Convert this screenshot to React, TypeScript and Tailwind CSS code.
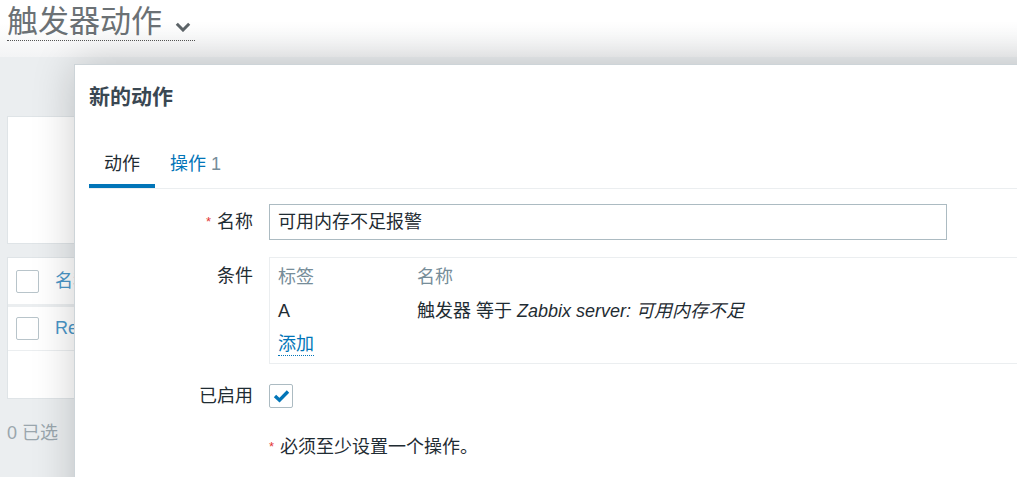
import React from "react";

const FONT = "font-['Liberation_Sans','Noto_Sans_CJK_SC',sans-serif]";

export default function App() {
  return (
    <div className={`relative w-[1017px] h-[477px] overflow-hidden bg-[#ebeef0] ${FONT} text-[18px] text-[#1f2c33]`}>
      {/* Page header */}
      <header className="h-[57px] bg-gradient-to-b from-white from-40% to-[#f3f4f5] px-[7px]">
        <div className="inline-flex items-center gap-[13px] pt-[4px] border-b border-dotted border-[#555]">
          <span className="text-[31px] leading-[36px] text-[#6b7175]">触发器动作</span>
          <svg width="16" height="10" viewBox="0 0 16 10" className="mt-[9px] mr-[4px]">
            <path d="M1.8 1.8 L8 8 L14.2 1.8" fill="none" stroke="#5d6468" strokeWidth="3" />
          </svg>
        </div>
      </header>

      {/* Background page content */}
      <main className="px-[7px] pt-[59px]">
        <div className="h-[128px] bg-white border border-[#dfe4e7]" />
        <div className="mt-[13px] bg-white border border-[#dfe4e7]">
          <div className="h-[46px] flex items-center gap-[16px] pl-[8px]">
            <div className="w-[23px] h-[23px] rounded-[2px] border border-[#b8c4ca] bg-white" />
            <span className="text-[#4a96c8]">名称</span>
          </div>
          <div className="h-[3px] bg-[#ebeef0]" />
          <div className="h-[44px] flex items-center gap-[16px] pl-[8px] border-b border-[#ebeef0]">
            <div className="w-[23px] h-[23px] rounded-[2px] border border-[#b8c4ca] bg-white" />
            <span className="text-[#4a96c8]">Report</span>
          </div>
          <div className="h-[47px]" />
        </div>
        <div className="mt-[22px] text-[#9aa6ad] leading-[24px]">0 已选</div>
      </main>

      {/* Dialog overlay */}
      <div className="absolute left-[74px] top-[64px] w-[1000px] h-[480px] bg-white border border-[#cdd4d8] shadow-[0_0_40px_rgba(0,0,0,0.2)] pl-[14px] pr-[15px]">
        <h2 className="pt-[20px] pb-[31px] text-[21px] leading-[24px] font-bold text-[#3a4752]">新的动作</h2>

        {/* Tabs */}
        <div className="flex border-b border-[#ebeef0]">
          <div className="px-[15px] pt-[12px] pb-[8px] border-b-4 border-[#0275b8] leading-[24px]">动作</div>
          <div className="px-[15px] pt-[12px] pb-[8px] border-b-4 border-transparent leading-[24px] text-[#0275b8]">
            操作 <span className="text-[#768d99]">1</span>
          </div>
        </div>

        {/* Form */}
        <div className="mt-[15px] flex items-center">
          <div className="w-[164px] text-right leading-[24px]">
            <span className="text-[#e33734] text-[13px] align-top mr-[6px]">*</span>名称
          </div>
          <div className="ml-[16px] w-[678px] h-[36px] border border-[#acbbc2] px-[8px] flex items-center leading-[24px]">
            可用内存不足报警
          </div>
        </div>

        <div className="mt-[17px] flex items-start">
          <div className="w-[164px] text-right leading-[24px] pt-[7px]">条件</div>
          <div className="ml-[16px] flex-1 h-[107px] border border-[#ebeef0] px-[8px] pt-[7px] leading-[24px]">
            <div className="flex text-[#768d99]">
              <div className="w-[139px]">标签</div>
              <div>名称</div>
            </div>
            <div className="flex mt-[10px]">
              <div className="w-[139px]">A</div>
              <div>
                触发器 等于 <span className="italic">Zabbix server: 可用内存不足</span>
              </div>
            </div>
            <div className="mt-[9px]">
              <span className="text-[#0275b8] border-b border-dotted border-[#0275b8] pb-[1px]">添加</span>
            </div>
          </div>
        </div>

        <div className="mt-[20px] flex items-center">
          <div className="w-[164px] text-right leading-[24px]">已启用</div>
          <div className="ml-[16px] w-[24px] h-[24px] rounded-[2px] border border-[#acbbc2] flex items-center justify-center">
            <svg width="17" height="14" viewBox="0 0 17 14">
              <path d="M2 7 L6.5 11.2 L15 2.5" fill="none" stroke="#0275b8" strokeWidth="3.4" />
            </svg>
          </div>
        </div>

        <div className="mt-[27px] ml-[180px] leading-[24px]">
          <span className="text-[#e33734] text-[13px] align-top mr-[6px]">*</span>必须至少设置一个操作。
        </div>
      </div>
    </div>
  );
}
